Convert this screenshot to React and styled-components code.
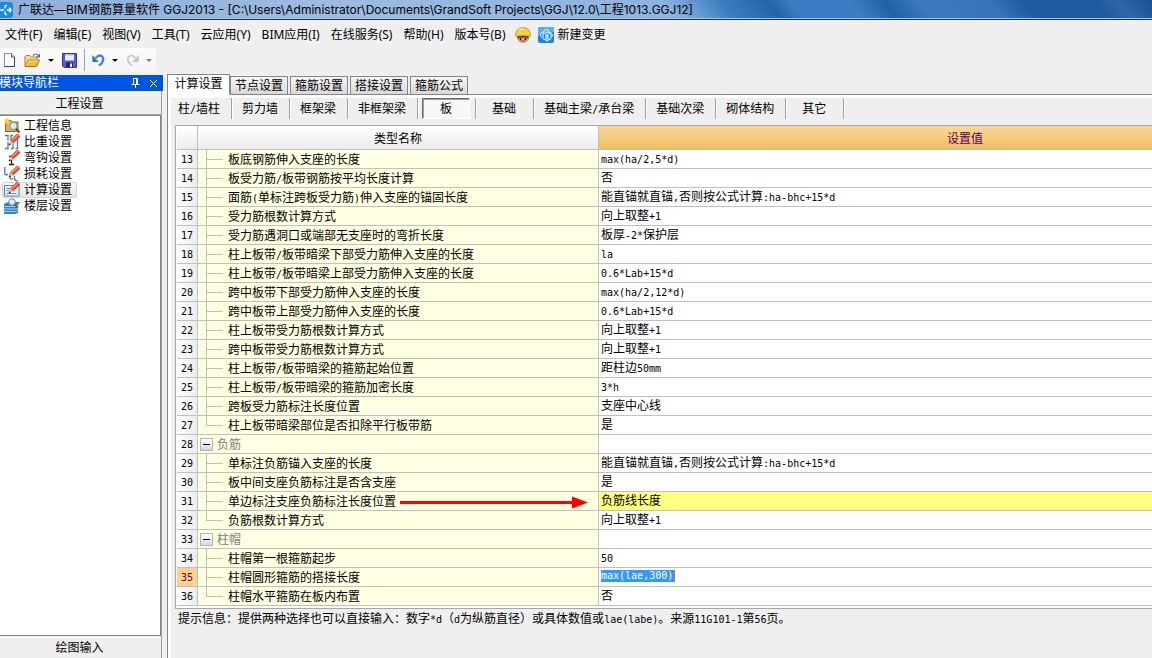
import React from "react";
import styled, { createGlobalStyle, css } from "styled-components";

const MENUS = ["文件(F)", "编辑(E)", "视图(V)", "工具(T)", "云应用(Y)", "BIM应用(I)", "在线服务(S)", "帮助(H)", "版本号(B)"];
const TABS = ["计算设置", "节点设置", "箍筋设置", "搭接设置", "箍筋公式"];
const MEMBERS = ["柱/墙柱", "剪力墙", "框架梁", "非框架梁", "板", "基础", "基础主梁/承台梁", "基础次梁", "砌体结构", "其它"];

const ROWS = [
  { no: 13, name: "板底钢筋伸入支座的长度", value: "max(ha/2,5*d)" },
  { no: 14, name: "板受力筋/板带钢筋按平均长度计算", value: "否" },
  { no: 15, name: "面筋(单标注跨板受力筋)伸入支座的锚固长度", value: "能直锚就直锚,否则按公式计算:ha-bhc+15*d" },
  { no: 16, name: "受力筋根数计算方式", value: "向上取整+1" },
  { no: 17, name: "受力筋遇洞口或端部无支座时的弯折长度", value: "板厚-2*保护层" },
  { no: 18, name: "柱上板带/板带暗梁下部受力筋伸入支座的长度", value: "la" },
  { no: 19, name: "柱上板带/板带暗梁上部受力筋伸入支座的长度", value: "0.6*Lab+15*d" },
  { no: 20, name: "跨中板带下部受力筋伸入支座的长度", value: "max(ha/2,12*d)" },
  { no: 21, name: "跨中板带上部受力筋伸入支座的长度", value: "0.6*Lab+15*d" },
  { no: 22, name: "柱上板带受力筋根数计算方式", value: "向上取整+1" },
  { no: 23, name: "跨中板带受力筋根数计算方式", value: "向上取整+1" },
  { no: 24, name: "柱上板带/板带暗梁的箍筋起始位置", value: "距柱边50mm" },
  { no: 25, name: "柱上板带/板带暗梁的箍筋加密长度", value: "3*h" },
  { no: 26, name: "跨板受力筋标注长度位置", value: "支座中心线" },
  { no: 27, name: "柱上板带暗梁部位是否扣除平行板带筋", value: "是", last: true },
  { no: 28, name: "负筋", value: "", group: true },
  { no: 29, name: "单标注负筋锚入支座的长度", value: "能直锚就直锚,否则按公式计算:ha-bhc+15*d" },
  { no: 30, name: "板中间支座负筋标注是否含支座", value: "是" },
  { no: 31, name: "单边标注支座负筋标注长度位置", value: "负筋线长度", marked: true },
  { no: 32, name: "负筋根数计算方式", value: "向上取整+1", last: true },
  { no: 33, name: "柱帽", value: "", group: true },
  { no: 34, name: "柱帽第一根箍筋起步", value: "50" },
  { no: 35, name: "柱帽圆形箍筋的搭接长度", value: "max(lae,300)", editing: true },
  { no: 36, name: "柱帽水平箍筋在板内布置", value: "否", last: true },
];

// Latin runs are half the width of a Chinese character
const Mixed = ({ text }) =>
  text.split(/([\x20-\x7e]+)/).map((part, i) => (i % 2 ? <Half key={i}>{part}</Half> : part));

const AppLogo = () => (
  <svg width="13" height="16" viewBox="0 0 13 16">
    <rect x="-4" y="0" width="17" height="16" rx="3" fill="#1a8ce0" />
    <path d="M0 8h4M7 8h4M5 6.500V5q0-2 2-1.500M5 9.500V11q0 2 2 1.500M9 6q2 .5 2 2t-2 2" stroke="#fff" strokeWidth="1.300" fill="none" />
  </svg>
);

const HelmetIcon = () => (
  <svg width="16" height="16" viewBox="0 0 16 16">
    <path d="M2.500 8h11v4.500q-1.500 3.300-5.500 3.300t-5.500-3.300z" fill="#dba070" />
    <path d="M2.500 9h11v3l-2-1.500h-7l-2 1.500z" fill="#4d2c16" />
    <path d="M5.500 11v2.300M10.500 11v2.300" stroke="#221208" strokeWidth="1.400" />
    <path d="M6.500 14.200h3" stroke="#9a3e2a" />
    <path d="M.500 9.500Q.500.600 8 .600t7.500 8.900q-7.500-2-15 0z" fill="#f8d22c" stroke="#b38a10" strokeWidth=".7" />
    <path d="M4 3.500Q6 1.800 8.500 2" stroke="#fff09a" strokeWidth="1.300" fill="none" />
    <circle cx="5.800" cy="5.500" r="1.200" fill="#bfdcea" />
  </svg>
);

const CloudIcon = () => (
  <svg width="16" height="16" viewBox="0 0 16 16">
    <rect width="16" height="16" rx="2" fill="#1f84dc" />
    <path d="M0 9V2q0-2 2-2h12q2 0 2 2v3Q7 5 0 9z" fill="#55b0f4" />
    <path d="M4 10.500Q1.500 9.500 2.500 7 3.700 5.500 5 6q1-4 3.700-3.500T11 5.500q3-.5 3.300 2t-1 2.500" stroke="#e9f6ff" fill="none" />
    <path d="M9 5l4 2.300v4.400L9 14l-4-2.300V7.300z" fill="#1f84dc" stroke="#fff" strokeWidth=".9" />
    <path d="M7 8h4M7 10h4M9 6.500V12M6.500 12h5" stroke="#fff" strokeWidth=".9" />
  </svg>
);

const NewIcon = () => (
  <svg width="12" height="16" viewBox="0 0 12 16">
    <path d="M.500 1.500h7l3 3.500v9.500H.500z" fill="#f7fbff" stroke="#8093ad" />
    <path d="M10.500 5v9.500H.500" fill="none" stroke="#34435c" />
    <path d="M7.500 1.500V5h3" fill="#bfd3ec" stroke="#51627e" />
  </svg>
);

const OpenIcon = () => (
  <svg width="17" height="16" viewBox="0 0 17 16">
    <path d="M1 14V4.500l1-1h4l1.500 1.500H13V8" fill="#f7d98a" stroke="#b08024" />
    <path d="M1 14.500L4.500 8H15.500l-3 6.500z" fill="#f0b93c" stroke="#a8740e" />
    <path d="M2.500 13.500L5 9h9" fill="none" stroke="#fbe2a0" />
    <path d="M9 3.500q2.500-3 5.500 0" fill="none" stroke="#51719c" strokeWidth="1.200" />
    <path d="M16 1.500v4h-4z" fill="#51719c" />
  </svg>
);

const SaveIcon = () => (
  <svg width="15" height="15" viewBox="0 0 15 15">
    <path d="M.500.500h14v14H2L.500 13z" fill="#5a5fcb" stroke="#34379a" />
    <path d="M3 1h9v6.500H3z" fill="#eef2ff" />
    <path d="M3 1h9v1.500H3z" fill="#a9b5ee" />
    <path d="M4 9.500h7V14H4z" fill="#25275f" />
    <path d="M8 10.500h2V14H8z" fill="#f0f0fa" />
  </svg>
);

const UndoIcon = () => (
  <svg width="13" height="14" viewBox="0 0 13 14">
    <path d="M3.500 5Q7 1.500 9.500 3t1.300 5q-.5 2.500-3.800 4.500" fill="none" stroke="#4a7fd6" strokeWidth="2.400" />
    <path d="M.300 2v7h6.500z" fill="#3c6fc4" />
  </svg>
);

const RedoIcon = () => (
  <svg width="13" height="14" viewBox="0 0 13 14">
    <path d="M9.500 5Q6 1.500 3.500 3T2.200 8q.5 2.500 3.800 4.500" fill="none" stroke="#cdcdcd" strokeWidth="2" />
    <path d="M12.700 2v7H6.200z" fill="#c6c6c6" />
  </svg>
);

const PinIcon = () => (
  <svg width="9" height="10" viewBox="0 0 9 10">
    <path d="M2.500 6V.500h4V6M5.500 1v5M.500 6.500h8M4.500 7v3" fill="none" stroke="#fff" />
  </svg>
);

const CloseIcon = () => (
  <svg width="9" height="9" viewBox="0 0 9 9">
    <path d="M1 1l7 7M8 1L1 8" stroke="#fff" />
  </svg>
);

const Pencil = () => (
  <g>
    <path d="M5.500 10l1-4L12.500 0H14l2 2v1L9.300 9.300z" fill="#e2472c" />
    <path d="M8 6.500L14 1" stroke="#ff9c80" strokeWidth="1.300" />
    <path d="M5.500 10.300l1-3.800 2.800 2.700z" fill="#f3d9a8" />
    <path d="M5 11l1.500-1.300" stroke="#222" strokeWidth="1.200" />
  </g>
);

const NAV_ICONS = {
  info: (
    <g>
      <path d="M1.500 2.500H7l1 1.500h6v9.500H1.500z" fill="#e2b04a" stroke="#8c6a20" />
      <path d="M0 3h6M3 0v6M1 1l4 4M5 1L1 5" stroke="#fbd42a" strokeWidth="1.200" />
      <circle cx="9.500" cy="8" r="3.700" fill="#d5e9f7" stroke="#7d8ea0" />
      <path d="M12 10.500l3.500 4" stroke="#7a4a1c" strokeWidth="2" />
    </g>
  ),
  weight: (
    <g>
      <path d="M1 1.500h3v5M4 8v6.500H1M7 6V1.500h2M7 14.500h2V9.500" fill="none" stroke="#4a77b8" strokeWidth="1.300" />
      <path d="M11.500 14.500h2V5" fill="none" stroke="#4a77b8" strokeWidth="1.300" />
      <Pencil />
    </g>
  ),
  hook: (
    <g>
      <path d="M5 6.500h5M7.500 6v8.500M5 14.500h5" fill="none" stroke="#222" strokeWidth="1.300" />
      <Pencil />
    </g>
  ),
  loss: (
    <g>
      <path d="M.800 1v7q1 2 3 0M6 7v5q1 2 3 .5M10.500 10v3q1 2.500 3.500 1.500" fill="none" stroke="#3e6aa8" strokeWidth="1.200" />
      <Pencil />
    </g>
  ),
  calc: (
    <g>
      <path d="M.500 3.500h14.500v10.500H.500z" fill="#eaf3ff" stroke="#4f85c9" />
      <path d="M2.500 6.500h4M2.500 8.500h3M2.500 11.500h10" stroke="#5a8fd0" />
      <Pencil />
    </g>
  ),
  floor: (
    <g>
      <path d="M0 6l4-2h12l-2 3v8l-3 1H0z" fill="#2f84d0" />
      <path d="M0 8.500h12l3-2M0 11h12l3-2M0 13.500h12l3-2" fill="none" stroke="#c4e2fa" strokeWidth=".8" />
      <circle cx="8" cy="4" r="3.300" fill="#d9ecf8" stroke="#7a8894" />
      <path d="M10.500 6.500l3.500 3" stroke="#8a5a28" strokeWidth="2" />
    </g>
  ),
};

const NAV = [
  ["info", "工程信息"],
  ["weight", "比重设置"],
  ["hook", "弯钩设置"],
  ["loss", "损耗设置"],
  ["calc", "计算设置"],
  ["floor", "楼层设置"],
];

const App = () => (
  <Window>
    <GlobalStyle />
    <TitleBar>
      <AppLogo />
      <TitleText>广联达—BIM钢筋算量软件 GGJ2013 - [C:\Users\Administrator\Documents\GrandSoft Projects\GGJ\12.0\工程1013.GGJ12]</TitleText>
    </TitleBar>

    <MenuBar>
      {MENUS.map((m) => (
        <MenuButton key={m}>{m}</MenuButton>
      ))}
      <IconPair>
        <MenuButton aria-label="客服"><HelmetIcon /></MenuButton>
        <MenuButton><CloudIcon />新建变更</MenuButton>
      </IconPair>
    </MenuBar>

    <ToolBar>
      <ToolButton aria-label="新建"><NewIcon /></ToolButton>
      <ToolButton aria-label="打开"><OpenIcon /><Caret /></ToolButton>
      <ToolButton aria-label="保存"><SaveIcon /></ToolButton>
      <ToolDivider />
      <ToolButton aria-label="撤销"><UndoIcon /><Caret /></ToolButton>
      <ToolButton aria-label="恢复" disabled><RedoIcon /><Caret $dim /></ToolButton>
    </ToolBar>

    <Body>
      <Sidebar>
        <SideHeader>
          <SideTitle>模块导航栏</SideTitle>
          <SideTool aria-label="固定"><PinIcon /></SideTool>
          <SideTool aria-label="关闭"><CloseIcon /></SideTool>
        </SideHeader>
        <SideInner>
          <SectionButton>工程设置</SectionButton>
          <NavList>
            {NAV.map(([icon, label]) => (
              <li key={label}>
                <NavLink href="#" $active={icon === "calc"}>
                  <svg width="16" height="16" viewBox="0 0 16 16">{NAV_ICONS[icon]}</svg>
                  {label}
                </NavLink>
              </li>
            ))}
          </NavList>
          <SectionButton>绘图输入</SectionButton>
        </SideInner>
      </Sidebar>

      <Main>
        <TabRow>
          {TABS.map((t, i) => (
            <Tab key={t} $active={i === 0}>{t}</Tab>
          ))}
        </TabRow>
        <Panel>
          <MemberBar>
            {MEMBERS.map((m) => (
              <MemberCell key={m}>
                <MemberButton $active={m === "板"}><Mixed text={m} /></MemberButton>
              </MemberCell>
            ))}
          </MemberBar>
          <GridFrame>
            <Grid>
              <colgroup>
                <NoCol />
                <NameCol />
                <col />
              </colgroup>
              <thead>
                <tr>
                  <Head />
                  <Head>类型名称</Head>
                  <Head $current>设置值</Head>
                </tr>
              </thead>
              <tbody>
                {ROWS.map((row) => (
                  <tr key={row.no}>
                    <NoCell $current={row.editing}><Half>{row.no}</Half></NoCell>
                    <NameCell>
                      <NameLine>
                        {row.group ? <Toggle aria-label="折叠" /> : <Branch $last={row.last} />}
                        <NameText $group={row.group}><Mixed text={row.name} /></NameText>
                        {row.marked && <Arrow />}
                      </NameLine>
                    </NameCell>
                    <ValueCell $marked={row.marked}>
                      {row.editing ? (
                        <ValueInput aria-label={row.name} defaultValue={row.value} />
                      ) : (
                        <Mixed text={row.value} />
                      )}
                    </ValueCell>
                  </tr>
                ))}
              </tbody>
            </Grid>
          </GridFrame>
          <Hint>
            <Mixed text="提示信息：提供两种选择也可以直接输入：数字*d（d为纵筋直径）或具体数值或lae(labe)。来源11G101-1第56页。" />
          </Hint>
        </Panel>
      </Main>
    </Body>
  </Window>
);

const Arrow = () => (
  <ArrowSvg width="188" height="14" viewBox="0 0 188 14">
    <path d="M0 6.500h174" stroke="#ff0000" strokeWidth="3" />
    <path d="M172 .500l16 6-16 6z" fill="#ff0000" />
  </ArrowSvg>
);

// Styled Components
const GlobalStyle = createGlobalStyle`
  * {
    box-sizing: border-box;
  }

  body {
    margin: 0;
    background: #efefef;
    color: #000;
    font: 12px/16px "Liberation Sans", "Noto Sans CJK SC", sans-serif;
  }

  button, input {
    margin: 0;
    padding: 0;
    border: 0;
    background: none;
    color: inherit;
    font: inherit;
  }

  svg {
    flex: none;
    display: block;
  }
`;

const Window = styled.div`
  display: flex;
  flex-direction: column;
  min-height: 100vh;
  overflow: hidden;
`;

const Half = styled.span`
  font-family: "DejaVu Sans Mono", monospace;
  font-size: 10px;
  line-height: 10px;
`;

const TitleBar = styled.header`
  display: flex;
  align-items: center;
  gap: 5px;
  height: 20px;
  border-bottom: 1px solid #1c3350;
  box-shadow: inset 0 -1px #a9c5e4;
  background: linear-gradient(53deg, #8fb0db 0%, #9dbbe2 30%, #8db3e0 58%, #3a7cc0 63%, #2264aa 67%, #3c7cc4 69%, #3c7cc4 74%, #2261a6 77%, #3c79c0 80%, #3873b8 86%, #1d5a9f 89%, #1f5a9e 95%, #2f66a8 97%, #1b5090 100%);
`;

const TitleText = styled.h1`
  margin: 0;
  font: 12px/18px Inter, "Noto Sans CJK SC", sans-serif;
  white-space: nowrap;
`;

const MenuBar = styled.nav`
  display: flex;
  align-items: center;
  gap: 11px;
  height: 28px;
  padding: 1px 0 0 5px;
  font-family: "Noto Sans", "Noto Sans CJK SC", sans-serif;
`;

const MenuButton = styled.button`
  display: flex;
  align-items: center;
  gap: 4px;
  white-space: nowrap;
`;

const IconPair = styled.div`
  display: flex;
  gap: 7px;
  margin-left: -2px;
`;

const ToolBar = styled.div`
  display: flex;
  align-items: center;
  align-self: flex-start;
  gap: 8px;
  height: 24px;
  padding: 0 4px;
  background: linear-gradient(#fbfbfb, #f4f4f4);
`;

const ToolButton = styled.button`
  display: flex;
  align-items: center;
  gap: 7px;
`;

const Caret = styled.span`
  border: 3px solid transparent;
  border-top-color: ${(p) => (p.$dim ? "#7d7d7d" : "#000")};
  border-bottom: 0;
`;

const ToolDivider = styled.span`
  width: 1px;
  height: 22px;
  margin: 0 -1px;
  background: #a0a0a0;
`;

const Body = styled.div`
  display: flex;
  flex: 1;
  padding-top: 2px;
`;

const Sidebar = styled.aside`
  display: flex;
  flex-direction: column;
  flex: none;
  width: 163px;
  padding-top: 1px;
`;

const SideHeader = styled.div`
  display: flex;
  align-items: center;
  height: 16px;
  padding-right: 5px;
  overflow: hidden;
  background: #0054e3;
  color: #fff;
`;

const SideTitle = styled.span`
  flex: 1;
  margin-left: -1px;
`;

const SideTool = styled.button`
  margin-left: 9px;
`;

const SideInner = styled.div`
  display: flex;
  flex: 1;
  flex-direction: column;
  margin-right: 1px;
  border-right: 1px solid #9a9a9a;
`;

const SectionButton = styled.button`
  height: 23px;
  margin-top: 1px;
  padding-right: 2px;
  border-top: 1px solid #fff;
  border-bottom: 1px solid #a0a0a0;
  background: #efefef;

  &:last-child {
    height: 21px;
    border-bottom: 0;
  }
`;

const NavList = styled.ul`
  flex: 1;
  margin: 0;
  padding: 2px 0 0 2px;
  border: solid #808590;
  border-width: 1px 1px 1px 0;
  background: #fff;
  list-style: none;
`;

const NavLink = styled.a`
  display: flex;
  align-items: center;
  gap: 4px;
  width: 75px;
  height: 16px;
  padding-left: 2px;
  color: #000;
  line-height: 16px;
  text-decoration: none;
  white-space: nowrap;
  ${(p) =>
    p.$active &&
    css`
      border-radius: 3px;
      background: linear-gradient(#f8f8f8, #e5e5e5);
      box-shadow: inset 0 0 0 1px #d4d4d4;
    `}
`;

const Main = styled.main`
  display: flex;
  flex: 1;
  flex-direction: column;
  min-width: 0;
  margin-left: 4px;
  border-left: 1px solid #85858f;
`;

const TabRow = styled.div`
  display: flex;
  align-items: flex-end;
  height: 21px;
  box-shadow: inset 0 -1px #85858f;
`;

const Tab = styled.button`
  width: 58px;
  height: 19px;
  margin-right: 2px;
  border: 1px solid #85858f;
  background: linear-gradient(#f6f6f6, #d8d8d8);
  ${(p) =>
    p.$active &&
    css`
      width: 62px;
      height: 21px;
      margin-right: 0;
      padding-bottom: 2px;
      border-left: 0;
      border-bottom-color: #fff;
      background: #fff;
    `}
`;

const Panel = styled.section`
  flex: 1;
  border: solid #fff;
  border-width: 3px 0 0 3px;
`;

const MemberBar = styled.div`
  display: flex;
  height: 27px;
`;

const MemberCell = styled.div`
  min-width: 58px;
  height: 21px;
  padding: 0 5px 0 4px;
  border-right: 1px solid #a0a0a0;
  box-shadow: 1px 0 #fff;

  &:first-child {
    padding-left: 1px;
  }
`;

const MemberButton = styled.button`
  width: 100%;
  height: 21px;
  padding: 0 6px;
  white-space: nowrap;
  ${(p) =>
    p.$active &&
    css`
      border: 1px solid #fff;
      border-top-color: #696969;
      border-left-color: #696969;
      background: #f7f7f7;
      box-shadow: inset 1px 1px #a0a0a0;
    `}
`;

const GridFrame = styled.div`
  margin-left: 4px;
  padding: 0 0 2px 1px;
  border: solid #a5a5ad;
  border-width: 1px 0 1px 1px;
  background: #fff;
  overflow: hidden;
`;

// the value column runs on past the right edge of the frame
const Grid = styled.table`
  width: calc(100% + 180px);
  border-spacing: 0;
  table-layout: fixed;
`;

const NoCol = styled.col`
  width: 21px;
`;

const NameCol = styled.col`
  width: 401px;
`;

const Head = styled.th`
  height: 24px;
  padding: 2px 0 0;
  border-right: 1px solid #c0c0c0;
  border-bottom: 1px solid #c0c0c0;
  background: linear-gradient(#fff, #ececec);
  font-weight: normal;
  ${(p) =>
    p.$current &&
    css`
      background: linear-gradient(#f9d89c, #efbe5c);
      color: #5a005a;
    `}
`;

const Cell = styled.td`
  height: 19px;
  padding: 0;
  border-right: 1px solid #c0c0c0;
  border-bottom: 1px solid #c0c0c0;
  line-height: 18px;
  white-space: nowrap;
`;

const NoCell = styled(Cell)`
  background: ${(p) => (p.$current ? "#ffd08a" : "linear-gradient(90deg, #fff, #ececec)")};
  color: ${(p) => (p.$current ? "#5a005a" : "#000")};
  text-align: center;
`;

const NameCell = styled(Cell)`
  background: #ffffe1;
`;

const NameLine = styled.div`
  display: flex;
  align-items: center;
  height: 18px;
`;

const Branch = styled.span`
  align-self: stretch;
  width: 17px;
  margin: 0 5px 0 8px;
  background:
    linear-gradient(#c0c0c0, #c0c0c0) 0 0 / 1px ${(p) => (p.$last ? "9px" : "100%")} no-repeat,
    linear-gradient(#c0c0c0, #c0c0c0) 0 9px / 17px 1px no-repeat;
`;

const Toggle = styled.button`
  display: flex;
  align-items: center;
  justify-content: center;
  width: 13px;
  height: 13px;
  margin: 0 4px 0 2px;
  border: 1px solid #b4b4bc;
  background: linear-gradient(#fff, #d5d9e0);

  &::before {
    content: "";
    width: 7px;
    height: 1px;
    background: #000;
  }
`;

const NameText = styled.span`
  padding-top: 2px;
  color: ${(p) => (p.$group ? "#808080" : "#000")};
`;

const ArrowSvg = styled.svg`
  align-self: flex-end;
  margin-left: 4px;
`;

const ValueCell = styled(Cell)`
  padding-left: 2px;
  border-right: 0;
  background: ${(p) => (p.$marked ? "#ffff80" : "#fff")};
`;

const ValueInput = styled.input`
  display: block;
  width: 74px;
  height: 12px;
  margin-bottom: 2px;
  border-right: 1px solid #c87820;
  background: #3399ff;
  color: #fff;
  font: 10px/12px "DejaVu Sans Mono", monospace;
`;

const Hint = styled.p`
  margin: 0;
  padding: 1px 7px;
  line-height: 18px;
`;

export default App;
